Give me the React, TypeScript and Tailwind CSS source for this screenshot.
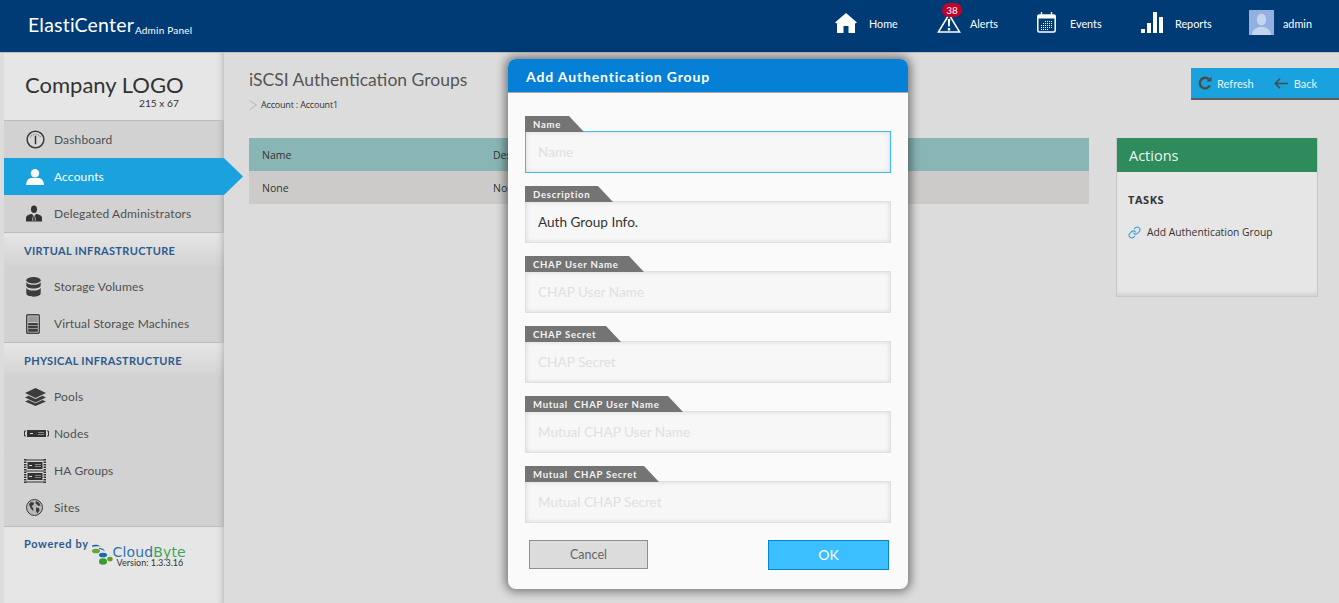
import React from "react";
import { Link as LinkIcon } from "lucide-react";

const HomeIcon = () => (
  <svg width="22" height="20" viewBox="0 0 22 20"><path fill="#fff" d="M11 0 L22 9.500 L20 10.500 L20 20 L13.500 20 L13.500 13 L8.500 13 L8.500 20 L2 20 L2 10.500 L0 9.500 Z" /></svg>
);
const AlertIcon = () => (
  <svg width="24" height="20" viewBox="0 0 24 20"><path fill="none" stroke="#fff" strokeWidth="1.500" d="M12 1.500 L22.600 19 L1.400 19 Z" /><path fill="#fff" d="M10.800 6h2.400l-.4 7.500h-1.600zM10.800 15h2.400v2.600h-2.400z" /></svg>
);
const CalendarIcon = () => (
  <svg width="19" height="21" viewBox="0 0 19 21">
    <rect x="0.800" y="3" width="17.400" height="17" rx="1.500" fill="none" stroke="#fff" strokeWidth="1.500" />
    <rect x="0.800" y="3" width="17.400" height="3.500" fill="#fff" />
    <path stroke="#fff" strokeWidth="1.300" d="M4.500 0v5M14.500 0v5" />
    <path stroke="#fff" strokeWidth="1" strokeDasharray="1 1" d="M8 9.500h8M6 11.500h10M4 13.500h12M4 15.500h12M4 17.500h8" />
  </svg>
);
const BarsIcon = () => (
  <svg width="22" height="21" viewBox="0 0 22 21" fill="#fff"><rect x="0" y="17" width="4" height="4" /><rect x="6" y="11" width="4" height="10" /><rect x="12" y="0" width="4" height="21" /><rect x="18" y="5" width="4" height="16" /></svg>
);
const Avatar = () => (
  <svg width="25" height="25" viewBox="0 0 25 25"><rect width="25" height="25" fill="#94b0e0" /><ellipse cx="12.500" cy="9.500" rx="4.600" ry="6" fill="#c6d5ee" /><path fill="#c6d5ee" d="M3 25c0-5 4-7 7-8h5c3 1 7 3 7 8z" /></svg>
);
const GaugeIcon = () => (
  <svg width="19" height="19" viewBox="0 0 20 20"><circle cx="10" cy="10" r="8.800" fill="#d8d8d8" stroke="#3e3e3e" strokeWidth="1.600" /><path fill="none" stroke="#777" strokeWidth="1.200" strokeDasharray="1 1" d="M4.500 8a6 6 0 0 1 11 0" /><path stroke="#333" strokeWidth="1.600" d="M10 6v9" /></svg>
);
const UserIcon = () => (
  <svg width="18" height="16" viewBox="0 0 19 17" fill="#fff"><ellipse cx="9.500" cy="4.500" rx="4.400" ry="4.500" /><path d="M0 17c0-5 3-7.500 6-7.500h7c3 0 6 2.500 6 7.500z" /></svg>
);
const AdminIcon = () => (
  <svg width="16" height="17" viewBox="0 0 17 17"><ellipse cx="8.500" cy="4" rx="3.200" ry="4" fill="#333" /><path fill="#333" d="M0 17v-4c0-2 3-3.500 5.500-4h6c2.500.5 5.500 2 5.500 4v4z" /><path fill="#ddd" d="M6.500 9h4l-1 1.500 1 5.500h-4l1-5.500z" /><path fill="#333" d="M8 10.500h1l.6 5-1.100 1-1.100-1z" /></svg>
);
const DbIcon = () => (
  <svg width="15" height="20" viewBox="0 0 15 20" fill="#3c3c3c"><ellipse cx="7.500" cy="3.200" rx="7.200" ry="3.200" /><path d="M.3 5.200c1.200 2 4 2.600 7.200 2.600s6-.6 7.200-2.600v3.300c0 1.700-3.200 3-7.200 3s-7.200-1.300-7.200-3z" /><path d="M.3 11c1.200 2 4 2.600 7.200 2.600s6-.6 7.200-2.600v5.300c0 2-3.200 3.400-7.200 3.400s-7.200-1.400-7.200-3.400z" /></svg>
);
const MachineIcon = () => (
  <svg width="14" height="20" viewBox="0 0 14 20"><rect x=".7" y=".7" width="12.600" height="18.600" rx="1" fill="#d0d0d0" stroke="#444" strokeWidth="1.400" /><rect x="2.200" y="2.200" width="9.600" height="6" fill="#9a9a9a" /><rect x="2.200" y="9" width="9.600" height="8.800" fill="#3e3e3e" /><path stroke="#bbb" strokeWidth=".7" d="M2.200 11.500h9.600M2.200 14.500h9.600" /></svg>
);
const LayersIcon = () => (
  <svg width="21" height="18" viewBox="0 0 21 18" fill="#3c3c3c"><path d="M10.500 0 21 5 10.500 10 0 5z" /><path d="M3.500 7.800 10.500 11 17.500 7.800 21 9.500 10.500 14.500 0 9.500z" /><path d="M3.500 12 10.500 15.200 17.500 12 21 13.500 10.500 18 0 13.500z" /></svg>
);
const NodeIcon = () => (
  <svg width="25" height="7" viewBox="0 0 25 7"><path stroke="#333" fill="none" d="M2 1H.5v5H2M23 1h1.500v5H23" /><rect x="3" y="0" width="19" height="7" fill="#333" /><path stroke="#ddd" d="M6 3.500h3" /><path stroke="#ddd" strokeDasharray="1 1" d="M15 2v3M17 2v3M19 2v3" /></svg>
);
const RackIcon = () => (
  <svg width="22" height="24" viewBox="0 0 22 24"><path stroke="#333" strokeWidth="2.400" strokeDasharray="1.500 1" d="M1.200 0v24M20.800 0v24" /><path stroke="#333" strokeWidth="1" d="M2 1h18M2 12h18M2 23h18" /><rect x="3.500" y="3" width="15" height="7" fill="#333" /><rect x="3.500" y="14" width="15" height="7" fill="#333" /><path stroke="#ddd" d="M5 6.500h3M5 17.500h3" /><path stroke="#ddd" strokeDasharray="1 1" d="M12 5v3M14 5v3M16 5v3M12 16v3M14 16v3M16 16v3" /></svg>
);
const GlobeIcon = () => (
  <svg width="17" height="17" viewBox="0 0 17 17"><circle cx="8.500" cy="8.500" r="8" fill="#b8b8b8" stroke="#3a3a3a" strokeWidth="1" /><path fill="#3a3a3a" d="M3 5l2-2 3 .5-.5 2.500-2 1 1.500 2 .5 3-1.500-1-2-3zM10 2l3 1.500 1.500 3-2 .5-1.500-1.500-1.500-1zM10 8.500l3 .5.5 2.500-2 3-1.500-2.500z" /></svg>
);
const RefreshIcon = () => (
  <svg width="14" height="14" viewBox="0 0 14 14" fill="none"><path stroke="#4a4a4a" strokeWidth="2.400" d="M11.800 9.500A5.300 5.300 0 1 1 10.800 3.200" /><path fill="#4a4a4a" d="M8.500 5.500h5v-5z" /></svg>
);
const BackIcon = () => (
  <svg width="14" height="11" viewBox="0 0 14 11" fill="none"><path stroke="#4a4a4a" strokeWidth="1.600" d="M14 5.500H1.500M6 .8 1.300 5.500 6 10.200" /></svg>
);
const CloudByteMark = () => (
  <svg width="22" height="22" viewBox="0 0 22 22">
    <path fill="#1f5fa8" d="M1 2.500C4 1 7 1.500 10 3.500 7 3 4 3 1 3.800z" />
    <path fill="#1f5fa8" d="M8 5c3 0 5 1 6 3.500C12 6.800 10 6.200 8 6z" />
    <ellipse cx="5" cy="8" rx="4" ry="2.300" fill="#6aa533" />
    <ellipse cx="12" cy="12" rx="4" ry="2.300" fill="#1569b8" />
    <ellipse cx="19" cy="16" rx="2.700" ry="2.300" fill="#5b9e2e" />
    <ellipse cx="12" cy="18.500" rx="4" ry="3.200" fill="#3d9a30" />
  </svg>
);

const NavItem = ({ icon, label, w }: { icon: React.ReactNode; label: string; w: string }) => (
  <div className={`flex items-center ${w}`}>
    {icon}
    <span className="mt-[4px] text-[10.800px]">{label}</span>
  </div>
);

const sideShade = "shadow-[inset_-7px_0_6px_-6px_rgba(0,0,0,0.22)]";

const SideRow = ({ icon, label, box = "w-[30px]", h = "h-[37px]", border = "" }: { icon: React.ReactNode; label: string; box?: string; h?: string; border?: string }) => (
  <div className={`flex items-center bg-[#d2d2d2] pl-[20px] ${h} ${border} shadow-[inset_-7px_0_6px_-6px_rgba(0,0,0,0.22)]`}>
    <div className={`flex items-center justify-start ${box}`}>{icon}</div>
    <span className="text-[12px] tracking-[0.012em] text-[#505050]">{label}</span>
  </div>
);

const SectionHead = ({ label }: { label: string }) => (
  <div className={`h-[35px] bg-gradient-to-b from-[#e6e6e6] to-[#d2d2d2] pl-[20px] pt-[10px] text-[11px] leading-[16px] font-bold tracking-[0.03em] text-[#2d5a8e] ${sideShade}`}>
    {label}
  </div>
);

const Field = ({ label, tab, placeholder, value, focus }: { label: string; tab: string; placeholder?: string; value?: string; focus?: boolean }) => (
  <div className="mb-[13px]">
    <div className="flex h-[16px]">
      <div className={`${tab} h-[16px] bg-[#747474] pl-[8px] text-[9.500px] leading-[17px] font-bold tracking-[0.08em] whitespace-pre text-[#f4f4f4]`}>{label}</div>
      <div className="relative h-[16px] w-[15px] bg-[#747474] [clip-path:polygon(0_0,100%_100%,0_100%)]" />
    </div>
    <div className={`mt-[-1px] flex h-[42px] w-[366px] items-center border bg-[#f7f7f7] pl-[12px] text-[13.600px] shadow-[inset_0_0_5px_rgba(0,0,0,0.13)] ${focus ? "border-[#3bbcf5]" : "border-[#e0e0e0]"} ${value ? "text-[#333]" : "text-[#e0e0e0]"}`}>
      {value ?? placeholder}
    </div>
  </div>
);

export default function App() {
  return (
    <div className="relative flex h-[603px] w-full flex-col overflow-hidden bg-[#dcdcdc] font-['Lato','Liberation_Sans',sans-serif]">
      <header className="flex h-[53px] shrink-0 items-center border-b border-[#bdbdbd] bg-[#003b75] text-white">
        <div className="ml-[28px] flex items-end pb-[3px]">
          <span className="text-[19.500px] leading-[24px] tracking-[0.01em]">ElastiCenter</span>
          <span className="ml-[1px] text-[10px] leading-[14px] tracking-[0.02em]">Admin Panel</span>
        </div>
        <nav className="ml-auto flex items-center pb-[7px]">
          <NavItem w="w-[102px] gap-[12px]" icon={<HomeIcon />} label="Home" />
          <div className="relative flex w-[100px] items-center gap-[9px]">
            <AlertIcon />
            <span className="mt-[4px] text-[10.800px]">Alerts</span>
            <span className="absolute top-[-9px] left-[5px] flex h-[14px] w-[20px] items-center justify-center rounded-full bg-[#c4002b] text-[10px] text-white">38</span>
          </div>
          <NavItem w="w-[104px] gap-[14px]" icon={<CalendarIcon />} label="Events" />
          <NavItem w="w-[108px] gap-[12px]" icon={<BarsIcon />} label="Reports" />
          <NavItem w="w-[90px] gap-[9px]" icon={<Avatar />} label="admin" />
        </nav>
      </header>

      <div className="flex min-h-0 flex-1">
        <aside className="relative ml-[4px] flex w-[220px] shrink-0 flex-col bg-[#e6e6e6]">
          <div className={`h-[68px] border-b border-[#bcbcbc] pt-[20px] pl-[21px] text-[#333] ${sideShade}`}>
            <div className="text-[22px] leading-[24px]">Company LOGO</div>
            <div className="pt-[1px] pl-[114px] text-[10.200px] leading-[11px]">215 x 67</div>
          </div>
          <SideRow icon={<GaugeIcon />} label="Dashboard" box="w-[30px] pl-[2px]" />
          <div className="relative flex h-[37px] items-center bg-[#19a2dd] pl-[20px] text-white">
            <div className="w-[30px] pl-[2px]"><UserIcon /></div>
            <span className="text-[12px] tracking-[0.012em]">Accounts</span>
            <div className="absolute top-0 left-[220px] h-[37px] w-[19px] bg-[#19a2dd] [clip-path:polygon(0_0,100%_50%,0_100%)]" />
          </div>
          <SideRow icon={<AdminIcon />} label="Delegated Administrators" box="w-[30px] pl-[2px]" h="h-[38px]" border="border-b border-[#bcbcbc]" />
          <SectionHead label="VIRTUAL INFRASTRUCTURE" />
          <SideRow icon={<DbIcon />} label="Storage Volumes" box="w-[30px] pl-[2px]" />
          <SideRow icon={<MachineIcon />} label="Virtual Storage Machines" box="w-[30px] pl-[2px]" h="h-[38px]" border="border-b border-[#bcbcbc]" />
          <SectionHead label="PHYSICAL INFRASTRUCTURE" />
          <SideRow icon={<LayersIcon />} label="Pools" box="w-[30px] pl-[1px]" />
          <SideRow icon={<NodeIcon />} label="Nodes" />
          <SideRow icon={<RackIcon />} label="HA Groups" />
          <SideRow icon={<GlobeIcon />} label="Sites" box="w-[30px] pl-[2px]" h="h-[38px]" border="border-b border-[#bcbcbc]" />
          <div className={`flex flex-1 pt-[9px] pl-[20px] ${sideShade}`}>
            <span className="text-[11px] leading-[16px] font-bold tracking-[0.06em] text-[#2d5a8e]">Powered by</span>
            <div className="mt-[7px] ml-[2px] flex">
              <CloudByteMark />
              <div className="flex flex-col pt-[3px]">
                <span className="font-['DejaVu_Sans',sans-serif] text-[14px] leading-[12px] font-normal tracking-[0.01em]"><span className="text-[#2f73ad]">Cloud</span><span className="text-[#3fa45a]">Byte</span></span>
                <span className="pl-[4px] text-[9px] leading-[10px] text-[#333]">Version: 1.3.3.16</span>
              </div>
            </div>
          </div>
        </aside>

        <main className="min-w-0 flex-1 pl-[25px]">
          <div className="flex h-[85px]">
            <div className="pt-[15px]">
              <h1 className="text-[17.500px] leading-[24px] font-normal text-[#555]">iSCSI Authentication Groups</h1>
              <div className="mt-[6px] flex items-center gap-[4px] text-[9px] leading-[14px] text-[#333]">
                <svg width="8" height="10" viewBox="0 0 8 10" fill="none"><path stroke="#b4b4b4" d="M.5.5 7.500 5 .5 9.500" /></svg>
                <span className="font-['Open_Sans','Liberation_Sans',sans-serif] tracking-[-0.02em]">Account : Account1</span>
              </div>
            </div>
            <div className="mt-[15px] ml-auto flex h-[32px] w-[148px] items-center border-b-2 border-[#5c5c5c] bg-[#19a2dd] pl-[7px] text-[11px] text-[#e8f4fa]">
              <RefreshIcon />
              <span className="mt-[2px] ml-[5px]">Refresh</span>
              <span className="ml-[20px] flex"><BackIcon /></span>
              <span className="mt-[2px] ml-[6px]">Back</span>
            </div>
          </div>
          <div className="flex">
            <div className="w-[840px] font-['Open_Sans','Liberation_Sans',sans-serif] text-[10.500px] text-[#333]">
              <div className="flex h-[33px] items-center bg-[#8ab5b5] pt-[2px] pl-[13px]">
                <span className="w-[231px]">Name</span>
                <span>Description</span>
              </div>
              <div className="flex h-[33px] items-center bg-[#cdcbc9] pt-[2px] pl-[13px]">
                <span className="w-[231px]">None</span>
                <span>None</span>
              </div>
            </div>
            <div className="ml-[27px] h-[159px] w-[202px] border-x border-b border-[#c8c8c8] bg-[#e6e6e6] font-['Open_Sans','Liberation_Sans',sans-serif] shadow-[inset_0_-4px_5px_-3px_rgba(0,0,0,0.14)]">
              <div className="flex h-[34px] items-center bg-[#2e8b5c] pt-[1px] pl-[12px] text-[14.500px] text-[#eaf5ef]">Actions</div>
              <div className="pt-[20px] pl-[11px] text-[11px] leading-[16px] font-bold tracking-[0.05em] text-[#333]">TASKS</div>
              <div className="mt-[17px] flex items-center pl-[11px] text-[10.300px] text-[#333]">
                <LinkIcon size={13} strokeWidth={2} className="text-[#3a9fd8]" />
                <span className="ml-[6px]">Add Authentication Group</span>
              </div>
            </div>
          </div>
        </main>
      </div>

      <div className="absolute top-[59px] left-[508px] h-[530px] w-[400px] rounded-[8px] bg-[#fafafa] shadow-[0_0_10px_3px_rgba(0,0,0,0.45)]">
        <div className="flex h-[34px] items-center rounded-t-[8px] border-b border-[#a8a8a8] bg-[#0580d6] pt-[1px] pl-[18px] text-[14px] font-bold tracking-[0.06em] text-white">
          Add Authentication Group
        </div>
        <div className="pt-[23px] pl-[17px]">
          <Field label="Name" tab="w-[44px]" placeholder="Name" focus />
          <Field label="Description" tab="w-[73px]" value="Auth Group Info." />
          <Field label="CHAP User Name" tab="w-[104px]" placeholder="CHAP User Name" />
          <Field label="CHAP Secret" tab="w-[81px]" placeholder="CHAP Secret" />
          <Field label="Mutual  CHAP User Name" tab="w-[143px]" placeholder="Mutual CHAP User Name" />
          <Field label="Mutual  CHAP Secret" tab="w-[119px]" placeholder="Mutual CHAP Secret" />
        </div>
        <div className="flex items-start pt-[4px] pr-[19px] pl-[21px]">
          <div className="flex h-[29px] w-[119px] items-center justify-center border border-[#8f8f8f] bg-[#dcdcdc] pt-[1px] text-[12.500px] text-[#666]">Cancel</div>
          <div className="ml-auto flex h-[30px] w-[121px] items-center justify-center border border-[#0a84c8] bg-[#3bbfff] pb-[1px] text-[14px] text-white">OK</div>
        </div>
      </div>
    </div>
  );
}
